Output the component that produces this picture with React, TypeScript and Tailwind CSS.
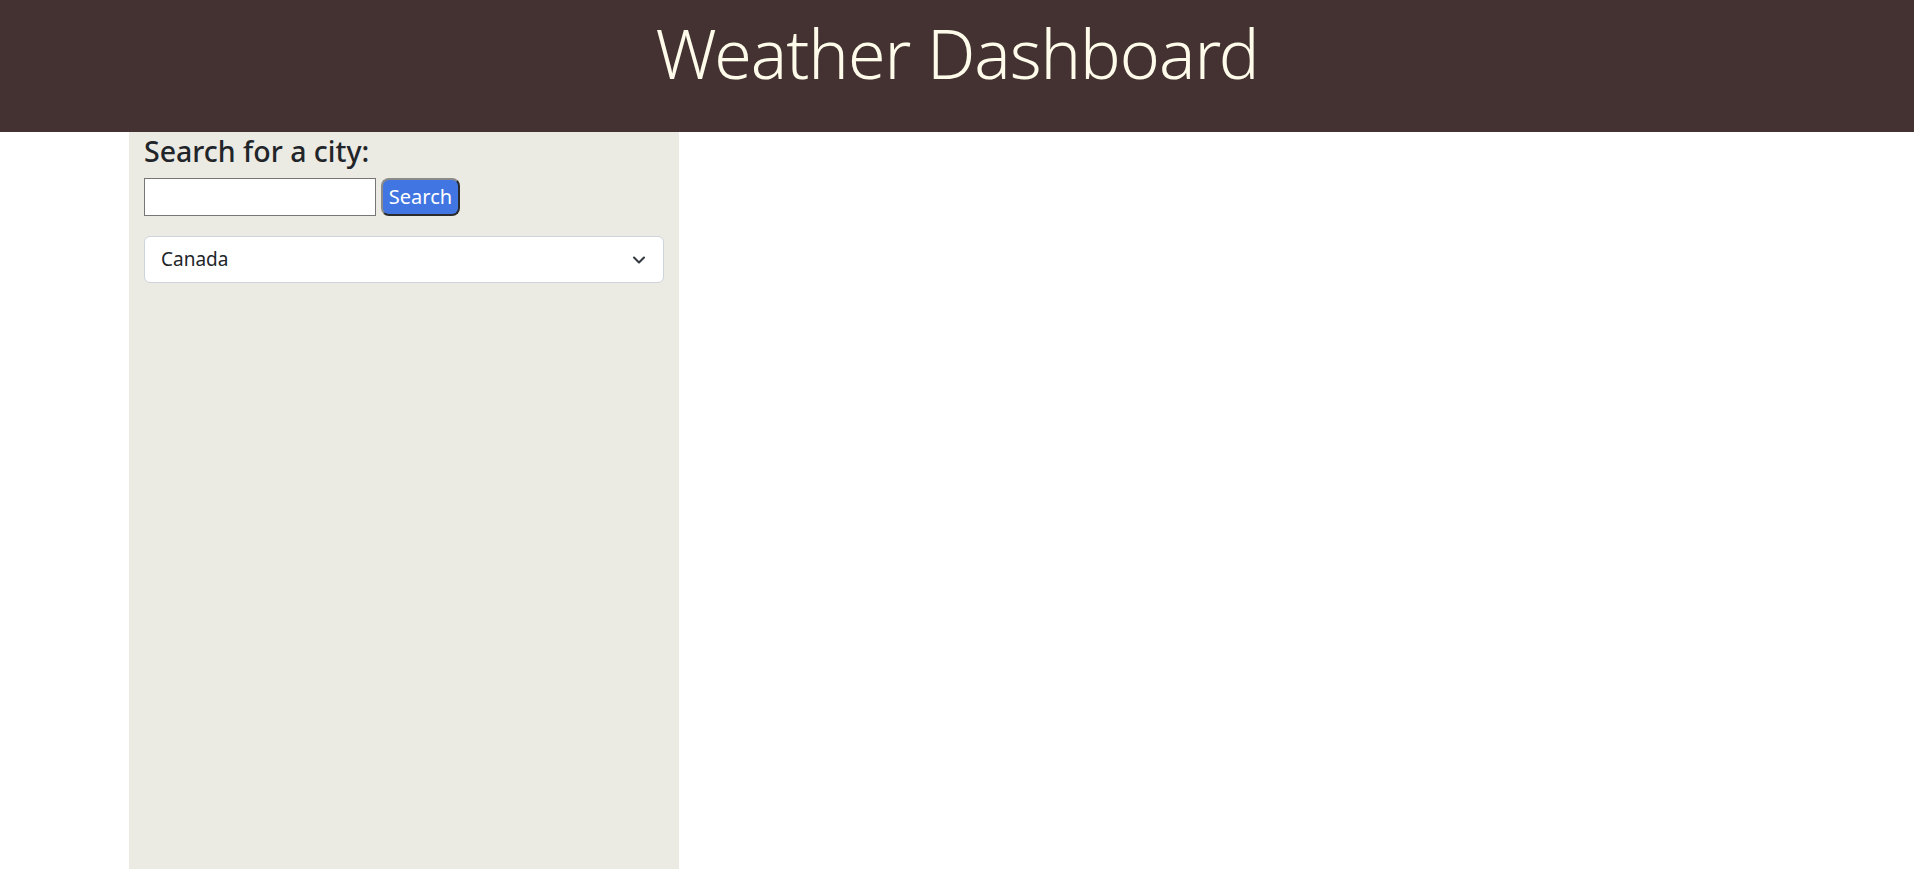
import { ChevronDown } from 'lucide-react';

export default function App() {
  return (
    <div className="min-h-screen bg-white font-['Noto_Sans',_'Open_Sans',_sans-serif] text-[#212529]">
      <header className="flex h-[132px] justify-center bg-[#433231] pt-[8px]">
        <h1 className="text-[68px] font-light leading-[90px] tracking-[-1px] text-[#fffbeb]">Weather Dashboard</h1>
      </header>

      <div className="flex">
        <aside className="ml-[129px] min-h-[737px] w-[550px] bg-[#ebeae3] px-[15px] pt-[1px]">
          <h2 className="text-[28.5px] font-medium leading-[36px] text-[#212529]">Search for a city:</h2>
          <div className="mt-[9px] flex items-center gap-[5px]">
            <input
              type="text"
              className="h-[38px] w-[232px] border border-[#767676] bg-white px-2 text-[18px] outline-none"
            />
            <button className="h-[38px] w-[79px] rounded-[8px] border-2 border-t-[#8a8a8a] border-l-[#8a8a8a] border-r-[#2b2b2b] border-b-[#2b2b2b] bg-[#4175e1] text-[20px] leading-none text-white">
              Search
            </button>
          </div>
          <div className="mt-[20px] flex h-[47px] w-[520px] items-center justify-between rounded-[6px] border border-[#ced4da] bg-white pl-[16px] pr-[14px]">
            <span className="text-[19px] text-[#212529]">Canada</span>
            <ChevronDown className="h-[20px] w-[20px] text-[#343a40]" strokeWidth={2.5} />
          </div>
        </aside>
        <main className="flex-1" />
      </div>
    </div>
  );
}
